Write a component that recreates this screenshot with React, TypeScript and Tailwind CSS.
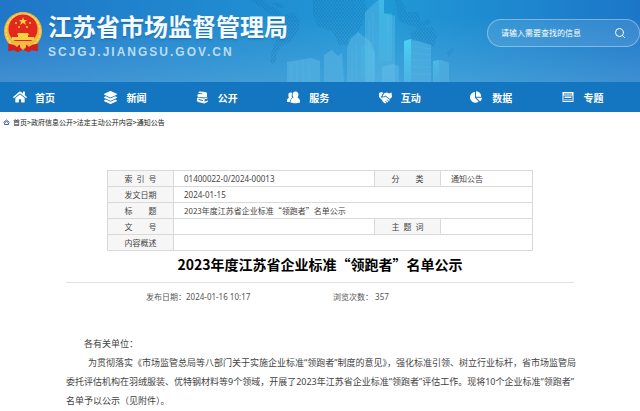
import { FaChartPie, FaHome, FaLayerGroup } from "react-icons/fa";
import { FiSearch } from "react-icons/fi";

const BooksIcon = () => (
  <svg viewBox="0 0 26 26" fill="currentColor" className="h-[13px] w-[13px]">
    <path d="M7 1l12 1 3 2v8l-3 1-14-1c-3-1-3-5 0-6l8 .6V5L5 4c0-2 1-3 2-3z" />
    <path d="M3 13l13 2 7-2v2l-6 2v4l7-2v2l-7 4-13-3c-3-1-3-6-1-9zm2 3v2l9 2v-2z" fillRule="evenodd" />
  </svg>
);

const PeopleIcon = () => (
  <svg viewBox="0 0 26 26" fill="currentColor" className="h-[13px] w-[13px]">
    <path d="M7 3c2 0 3 .5 3.500 1.500C9 7 9 11 10.500 13.500 7.500 15 6 18 5.500 22H0c-.5-5 1-7 4-8-2-4-2-11 3-11z" />
    <path d="M17 1c7 0 7 9 4 12.500 3.500 1 5.500 4 5 9.500-5 2-14 2-19 0 0-5.500 2-8.500 6-9.500C10 10 10 1 17 1z" />
  </svg>
);

const HandsIcon = () => (
  <svg viewBox="0 0 26 26" fill="currentColor" className="h-[13px] w-[13px]">
    <path d="M0 4l5-2 4 2-2 2-3 6 3 4-2 1-5-5z" />
    <path d="M11 4l5-1 4 2 5-2 1 9-4 4-9-7c-2 2-4 3-6 1z" />
    <path d="M6 12c3 1 5 1 7-1l9 7-2 2-4-3-1 1 4 3-2 2-4-3-1 1 3 2-2 2-5-3-3-6 2-3z" />
  </svg>
);

const TopicIcon = () => (
  <svg viewBox="0 0 24 24" className="h-3 w-3">
    <path
      d="M1 2h22v20H1zM4 5v2h16V5zM3 9v11h18V9z"
      fill="currentColor"
      fillRule="evenodd"
    />
    <path d="M5 11h14v3H5zM5 16h2v3H5zM9 16h2v3H9zM13 16h2v3h-2zM17 16h2v3h-2z" fill="currentColor" />
  </svg>
);

const navItems = [
  { label: "首页", icon: <FaHome className="h-[14px] w-[14px]" /> },
  { label: "新闻", icon: <FaLayerGroup className="h-[13px] w-[13px]" /> },
  { label: "公开", icon: <BooksIcon /> },
  { label: "服务", icon: <PeopleIcon /> },
  { label: "互动", icon: <HandsIcon /> },
  { label: "数据", icon: <FaChartPie className="h-3 w-3" /> },
  { label: "专题", icon: <TopicIcon /> },
];

const Emblem = () => (
  <svg viewBox="0 0 40 42" className="h-[42px] w-10 shrink-0">
    <path d="M6 31l-1 9 6-1 3 2 6-2 6 2 3-2 6 1-1-9z" fill="#d3201f" />
    <circle cx="20" cy="20" r="19" fill="#efb93c" />
    <circle cx="20" cy="20" r="17" fill="none" stroke="#f9d768" strokeWidth="1.500" strokeDasharray="3 1" />
    <circle cx="20" cy="18" r="14.500" fill="#e2281f" />
    <path d="M20 6l1 3h3l-2 2 1 3-3-2-3 2 1-3-2-2h3z" fill="#f8cf45" />
    <g fill="#f8cf45">
      <circle cx="13" cy="12" r="1" />
      <circle cx="27" cy="12" r="1" />
      <circle cx="16" cy="16" r="1" />
      <circle cx="24" cy="16" r="1" />
    </g>
    <path d="M15 22h10l1 2h-1v2h6v3H9v-3h6v-2h-1z" fill="#f8cf45" />
    <path d="M8 30h24l-3 4H11z" fill="#efb93c" />
    <path d="M5 33c5 0 7 1 9 3l2-2h8l2 2c2-2 4-3 9-3l-1 7-6-1-3 2-5-3-5 3-3-2-6 1z" fill="#d3201f" />
    <circle cx="20" cy="35" r="3" fill="#f2c048" />
  </svg>
);

// world map dots and skyline behind the site name
const Skyline = () => (
  <svg
    viewBox="0 0 640 82"
    preserveAspectRatio="xMidYMax slice"
    className="absolute inset-0 h-full w-full"
    aria-hidden="true"
  >
    <defs>
      <pattern id="dots" width="3" height="4" patternUnits="userSpaceOnUse">
        <circle cx="1" cy="1" r="1" fill="#136fb3" />
        <circle cx="2.500" cy="3" r="1" fill="#136fb3" />
      </pattern>
      <linearGradient id="tower" x1="0" y1="0" x2="0" y2="1">
        <stop offset="0" stopColor="#7cd0f2" stopOpacity=".3" />
        <stop offset="1" stopColor="#7cd0f2" stopOpacity=".2" />
      </linearGradient>
      <linearGradient id="glass" x1="0" y1="0" x2="0" y2="1">
        <stop offset="0" stopColor="#4be0f6" stopOpacity=".75" />
        <stop offset="1" stopColor="#4bc8f0" stopOpacity=".3" />
      </linearGradient>
    </defs>
    <g fill="url(#dots)" opacity=".35">
      <path d="M250 0h14l4 5 8 3 6 7-4 2-10-4-8-6zM271 3h10l4 5h-6z" />
      <path d="M284 15l10-3 6 8-1 4 0 6-8 12-9 4-5 6-2 12-5-1 1-10 6-16-3-12z" />
      <path d="M313 0h51l3 8-7 22-10 7-3 8-8 0-6-13-16-6-4-12z" />
      <path d="M395 0h7l5 12 11-1 3 11 9-3 1 5-14 4-18-7zM411 33l8-6 14 0 4 10-3 10-14-6-10 0zM447 53l6-6 1 3-6 7z" />
    </g>
    <g fill="url(#tower)">
      <path d="M287 62l24-4 9 3v21h-33z" />
      <path d="M324 55l8-5 7 7v25h-15zM339 55l3-2 2 29h-5z" />
      <path d="M347 49l3-9 8-8 13 10 4 11v29h-28z" />
      <path d="M365 12l12-11 4-2h3v83h-19z" />
      <path d="M384 13l11 3v66h-11z" />
      <path d="M382 67l10-3 7 2v16h-17z" />
      <path d="M404 41l7-2 20 6v37h-27z" />
      <path d="M433 61l8-1 8 3v19h-16z" />
    </g>
    <path d="M379 0h5v60h-5zM384 14l8-1v48h-8zM361 45l13 4v30h-13z" fill="url(#glass)" opacity=".35" />
    <path d="M404 41l7-2v43h-7z" fill="url(#glass)" />
    <path d="M433 61l6-1v22h-6z" fill="url(#glass)" opacity=".35" />
    <path
      d="M411 46l20 3M411 53l20 2M411 60h20M411 67h20M411 74h20M352 50v32M356 42v38M369 20v62M373 12v70M388 16v46M291 64v18M297 62v20M303 61v21M309 60v22"
      stroke="#8bd8f5"
      strokeOpacity=".12"
      fill="none"
    />
  </svg>
);

const SiteHeader = () => {
  return (
    <header>
      <div className="relative h-[82px] bg-linear-to-r from-[#2076c7] via-[#2199d6] via-60% to-[#1c76c8]">
        <div className="absolute inset-0 bg-linear-to-b from-transparent from-20% to-[#70b5e0]/40" />
        <Skyline />
        <div className="relative flex items-start justify-between">
          <a href="#" className="flex pt-[11px] pl-[3px] text-white">
            <Emblem />
            <div className="pl-[5px]">
              <div className="text-[24px] leading-[30px] font-bold text-[#f4faff] text-shadow-sm">
                江苏省市场监督管理局
              </div>
              <div className="pt-[2px] font-['Liberation_Sans'] text-[12px] leading-[18px] font-bold tracking-[2px] text-[#b9dcf6]">
                SCJGJ.JIANGSU.GOV.CN
              </div>
            </div>
          </a>
          <form className="mt-[19px] flex h-7 w-[153px] items-center rounded-full border border-white/35 bg-white/10 pr-[13px] pl-[13px] text-white">
            <input
              type="text"
              aria-label="搜索"
              placeholder="请输入需要查找的信息"
              className="min-w-0 flex-1 text-[8px] outline-none placeholder:text-white"
            />
            <button type="button" aria-label="搜索">
              <FiSearch className="h-3 w-3" />
            </button>
          </form>
        </div>
      </div>
      <nav className="bg-[#1475c0]">
        <ul className="grid h-[30px] grid-cols-7 items-center text-[10px] font-bold text-white">
          {navItems.map((item) => (
            <li key={item.label}>
              <a href="#" className="flex items-center pl-[13px]">
                <span className="flex w-[22px]">{item.icon}</span>
                {item.label}
              </a>
            </li>
          ))}
        </ul>
      </nav>
    </header>
  );
};

const crumbs = ["首页", "政府信息公开", "法定主动公开内容", "通知公告"];

const Breadcrumb = () => (
  <div className="flex h-5 items-center pl-[3px] text-[7px] text-[#222]">
    <svg viewBox="0 0 14 12" className="mr-[3px] h-[6px] w-[7px]">
      <path d="M1 7l6-5 6 5M3 8v3h8V8L7 5z" fill="none" stroke="#3f62a8" strokeWidth="2" />
    </svg>
    {crumbs.map((el, idx) => (
      <span key={el}>
        {idx > 0 && <span>&gt;</span>}
        <a href="#">{el}</a>
      </span>
    ))}
  </div>
);

const labelCell = "border border-[#d9d9d9] bg-[#f6f6f6] text-center font-normal";
const valueCell = "border border-[#d9d9d9] pl-[10px]";

const InfoTable = () => (
  <table className="w-full table-fixed border-collapse text-[8px] leading-[15px] text-[#444]">
    <colgroup>
      <col className="w-[66px]" />
      <col />
      <col className="w-[66px]" />
      <col className="w-[92px]" />
    </colgroup>
    <tbody>
      <tr className="h-4">
        <th className={labelCell}>索&ensp;引&ensp;号</th>
        <td className={`${valueCell} font-['Noto_Sans','Noto_Sans_CJK_SC',sans-serif]`}>
          01400022-0/2024-00013
        </td>
        <th className={labelCell}>分&emsp;&emsp;类</th>
        <td className={valueCell}>通知公告</td>
      </tr>
      <tr className="h-4">
        <th className={labelCell}>发文日期</th>
        <td colSpan={3} className={`${valueCell} font-['Noto_Sans','Noto_Sans_CJK_SC',sans-serif]`}>
          2024-01-15
        </td>
      </tr>
      <tr className="h-4">
        <th className={labelCell}>标&emsp;&emsp;题</th>
        <td colSpan={3} className={valueCell}>
          2023年度江苏省企业标准“领跑者”名单公示
        </td>
      </tr>
      <tr className="h-4">
        <th className={labelCell}>文&emsp;&emsp;号</th>
        <td className={valueCell}></td>
        <th className={labelCell}>主&ensp;题&ensp;词</th>
        <td className={valueCell}></td>
      </tr>
      <tr className="h-4">
        <th className={labelCell}>内容概述</th>
        <td colSpan={3} className={valueCell}></td>
      </tr>
    </tbody>
  </table>
);

const App = () => {
  return (
    <div
      lang="zh-CN"
      className="min-h-screen overflow-x-hidden bg-white font-['Noto_Sans_CJK_SC',sans-serif]"
    >
      <SiteHeader />
      <Breadcrumb />
      <main className="px-[66px] pt-[38px]">
        <div className="px-[41px]">
          <InfoTable />
        </div>
        <h1 className="border-b border-[#e2e2e2] pt-[2px] pb-[7px] text-center text-[14px] leading-[22px] font-bold text-black">
          2023年度江苏省企业标准“领跑者”名单公示
        </h1>
        <div className="flex pt-2 pl-20 font-['Noto_Sans','Noto_Sans_CJK_SC',sans-serif] text-[8px] leading-3 text-[#555]">
          <span className="w-[187px]">发布日期：2024-01-16 10:17</span>
          <span>浏览次数：&nbsp;357</span>
        </div>
        <article className="pt-[31px] font-['Noto_Sans','Noto_Sans_CJK_SC',sans-serif] text-[9px] leading-[19px] whitespace-nowrap text-[#444]">
          <p className="indent-[18px]">各有关单位：</p>
          <p className="indent-[22px]">
            为贯彻落实《市场监管总局等八部门关于实施企业标准“领跑者”制度的意见》，强化标准引领、树立行业标杆，省市场监管局
            <br />
            委托评估机构在羽绒服装、优特钢材料等9个领域，开展了2023年江苏省企业标准“领跑者”评估工作。现将10个企业标准“领跑者”
            <br />
            名单予以公示（见附件）。
          </p>
        </article>
      </main>
    </div>
  );
};

export default App;
